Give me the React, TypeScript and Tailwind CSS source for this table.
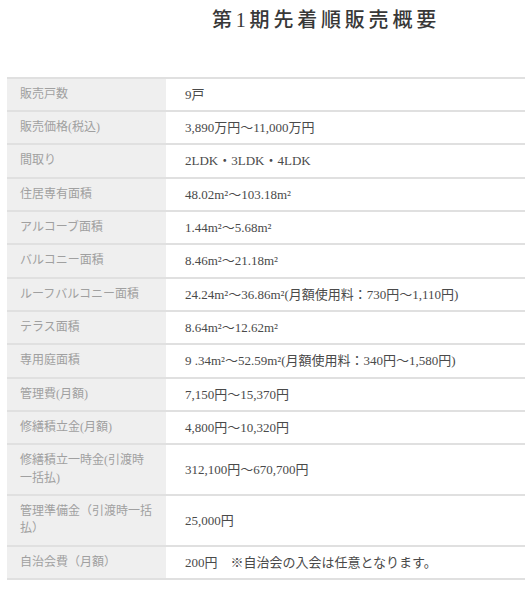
const rows: { label: string; value: string }[] = [
  { label: '販売戸数', value: '9戸' },
  { label: '販売価格(税込)', value: '3,890万円～11,000万円' },
  { label: '間取り', value: '2LDK・3LDK・4LDK' },
  { label: '住居専有面積', value: '48.02m²～103.18m²' },
  { label: 'アルコーブ面積', value: '1.44m²～5.68m²' },
  { label: 'バルコニー面積', value: '8.46m²～21.18m²' },
  { label: 'ルーフバルコニー面積', value: '24.24m²～36.86m²(月額使用料：730円～1,110円)' },
  { label: 'テラス面積', value: '8.64m²～12.62m²' },
  { label: '専用庭面積', value: '9 .34m²～52.59m²(月額使用料：340円～1,580円)' },
  { label: '管理費(月額)', value: '7,150円～15,370円' },
  { label: '修繕積立金(月額)', value: '4,800円～10,320円' },
  { label: '修繕積立一時金(引渡時一括払)', value: '312,100円～670,700円' },
  { label: '管理準備金（引渡時一括払）', value: '25,000円' },
  { label: '自治会費（月額）', value: '200円　※自治会の入会は任意となります。' },
];

export default function App() {
  return (
    <div
      className="min-h-screen bg-white overflow-hidden"
      style={{ fontFamily: '"Liberation Serif", "Noto Sans CJK JP", serif' }}
    >
      <h1 className="pt-[6px] pl-[212px] text-[20px] leading-[28px] tracking-[0.19em] font-medium text-[#383838] whitespace-nowrap">
        第1期先着順販売概要
      </h1>

      <div className="mt-[42.67px] ml-[7px] border-b-2 border-[#e0e0e0]">
        {rows.map((row) => (
          <div key={row.label} className="flex border-t-2 border-[#e0e0e0]">
            <div className="w-[159px] shrink-0 bg-[#efefef] pl-[13px] pr-[12px] py-[7px] text-[12px] leading-[17.33px] text-[#a0a0a0]">
              {row.label}
            </div>
            <div className="flex-1 flex items-center pl-[19px] pr-2 py-[7px] text-[13px] leading-[17.33px] text-[#4a4a4a] whitespace-nowrap">
              {row.value}
            </div>
          </div>
        ))}
      </div>
    </div>
  );
}
